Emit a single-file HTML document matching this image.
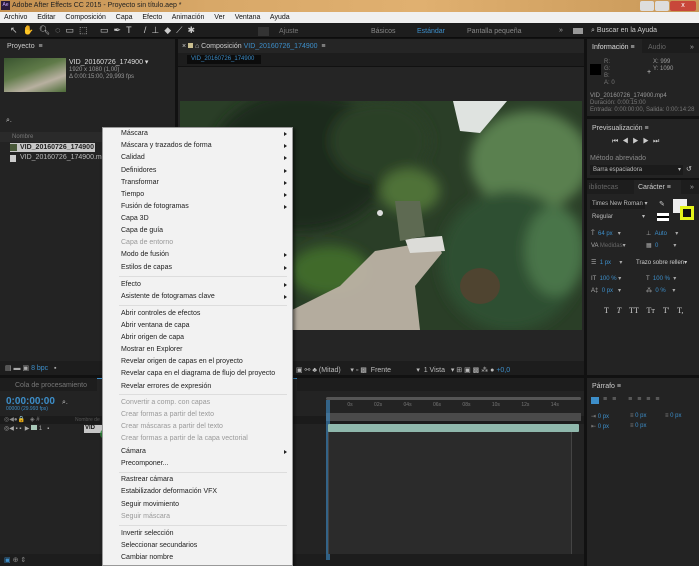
<!DOCTYPE html><html><head><meta charset="utf-8"><style>
*{margin:0;padding:0;box-sizing:border-box}
body{width:699px;height:566px;overflow:hidden;background:#111;font-family:"Liberation Sans",sans-serif;font-size:7px;color:#aaa;position:relative}
.a{position:absolute;white-space:nowrap}
.p{position:absolute;background:#232323}
.m{position:absolute;left:121px;color:#222;font-size:7px;white-space:nowrap}
.d{color:#9a9a9a}
.ar{position:absolute;left:284px;width:0;height:0;border-left:3px solid #222;border-top:2.5px solid transparent;border-bottom:2.5px solid transparent}
.sep{position:absolute;left:119px;width:168px;height:1px;background:#ddd}
.b{color:#3d8ec9}
.c{position:absolute;font-size:6px;color:#aaa;white-space:nowrap}
</style></head><body>
<div class="a" style="left:0;top:0;width:699px;height:12px;background:linear-gradient(90deg,#c49050,#d8a868 30%,#e0b070 60%,#c89858)"></div>
<div class="a" style="left:1px;top:1px;width:9px;height:9px;background:#2a1a3a;color:#c9a6ff;font-size:5px;line-height:9px;text-align:center">Ae</div>
<div class="a" style="left:12px;top:2px;color:#222;font-size:7px">Adobe After Effects CC 2015 - Proyecto sin título.aep *</div>
<div class="a" style="left:640px;top:1px;width:14px;height:10px;background:#ddd;border-radius:2px"></div>
<div class="a" style="left:655px;top:1px;width:14px;height:10px;background:#ddd;border-radius:2px"></div>
<div class="a" style="left:670px;top:1px;width:26px;height:10px;background:#c8473a;border-radius:2px;color:#fff;text-align:center;font-size:7px;line-height:10px">x</div>
<div class="a" style="left:0;top:12px;width:699px;height:11px;background:#f0f0f0;color:#111;font-size:7px;line-height:11px;padding-left:4px;word-spacing:3px">Archivo&nbsp; Editar&nbsp; Composición&nbsp; Capa&nbsp; Efecto&nbsp; Animación&nbsp; Ver&nbsp; Ventana&nbsp; Ayuda</div>
<div class="a" style="left:0;top:23px;width:699px;height:15px;background:#1d1d1d;border-bottom:1px solid #0c0c0c"></div>
<div class="a" style="left:10px;top:25px;color:#ccc;font-size:9px;letter-spacing:5px">↖✋🔍︎◌▭⬚ ▭✒T /⊥◆⟋✱</div>
<div class="a" style="left:258px;top:27px;width:11px;height:9px;background:#333"></div>
<div class="a" style="left:279px;top:28px;color:#777">Ajuste</div>
<div class="a" style="left:371px;top:28px;color:#888">Básicos</div>
<div class="a" style="left:417px;top:28px;color:#3d8ec9">Estándar</div>
<div class="a" style="left:467px;top:28px;color:#888">Pantalla pequeña</div>
<div class="a" style="left:559px;top:27px;color:#aaa">»</div>
<div class="a" style="left:573px;top:28px;width:10px;height:6px;background:#999"></div>
<div class="a" style="left:591px;top:27px;color:#ccc">⌕ Buscar en la Ayuda</div>
<!-- project -->
<div class="p" style="left:0;top:39px;width:175px;height:322px"></div>
<div class="a" style="left:7px;top:43px;color:#ccc">Proyecto &nbsp;≡</div>
<div class="a" style="left:4px;top:58px;width:62px;height:34px;background:linear-gradient(160deg,#3a5530,#5f7a48 40%,#b8b0a0 70%,#4a6a35)"></div>
<div class="a" style="left:69px;top:58px;color:#ddd">VID_20160726_174900 ▾</div>
<div class="a" style="left:69px;top:67px;color:#999;font-size:6px;line-height:7px">1920 x 1080 (1,00)<br>Δ 0:00:15:00, 29,993 fps</div>
<div class="a" style="left:6px;top:117px;color:#ccc">⌕.</div>
<div class="a" style="left:0;top:132px;width:175px;height:10px;background:#2a2a2a;color:#777;padding-left:12px;font-size:6px;line-height:10px">Nombre</div>
<div class="a" style="left:10px;top:143px;width:85px;height:9px;background:#c7c7c7;color:#222;font-weight:bold;font-size:7px;line-height:9px;padding-left:10px">VID_20160726_174900</div>
<div class="a" style="left:10px;top:144px;width:7px;height:7px;background:#4a5a3a"></div>
<div class="a" style="left:10px;top:155px;width:6px;height:7px;background:#ccc"></div>
<div class="a" style="left:20px;top:154px;color:#bbb">VID_20160726_174900.mp4</div>
<div class="a" style="left:0;top:361px;width:175px;height:14px;background:#1d1d1d"></div>
<div class="a" style="left:5px;top:364px;color:#aaa">▤ ▬ ▣ <span class="b">8 bpc</span> &nbsp; ▪</div>
<!-- comp -->
<div class="p" style="left:178px;top:39px;width:406px;height:322px;background:#252525"></div>
<div class="a" style="left:182px;top:43px;color:#ccc">× <span style="display:inline-block;width:5px;height:5px;background:#cbbf90"></span> ⌂ Composición <span class="b">VID_20160726_174900</span> &nbsp;≡</div>
<div class="a" style="left:178px;top:53px;width:406px;height:14px;background:#1d1d1d;border-bottom:1px solid #111"></div>
<div class="a" style="left:187px;top:55px;width:74px;height:9px;background:#0c0c0c;color:#3d8ec9;font-size:6px;line-height:9px;padding-left:4px">VID_20160726_174900</div>
<svg class="a" style="left:180px;top:101px" width="402" height="229" viewBox="0 0 402 229">
<defs><filter id="f" x="-50%" y="-50%" width="200%" height="200%"><feGaussianBlur stdDeviation="6"/></filter></defs>
<rect width="402" height="229" fill="#2a3e27"/>
<g filter="url(#f)">
<ellipse cx="120" cy="60" rx="90" ry="70" fill="#1e2c1c"/>
<ellipse cx="200" cy="40" rx="50" ry="40" fill="#2c3f25"/>
<ellipse cx="230" cy="90" rx="30" ry="22" fill="#4f7238"/>
<ellipse cx="150" cy="170" rx="40" ry="25" fill="#3f6a2c"/>
<ellipse cx="350" cy="60" rx="60" ry="50" fill="#5a8050"/>
<ellipse cx="330" cy="160" rx="70" ry="70" fill="#2f5030"/>
<ellipse cx="375" cy="150" rx="30" ry="45" fill="#4a7448"/>
</g>
<path d="M60 229 L100 215 L160 185 L195 150 L255 140 L262 152 L235 185 L240 229 Z" fill="#bcb2a4" opacity="0.95"/>
<path d="M225 138 L262 135 L265 150 L230 152 Z" fill="#dcdcd8"/>
<path d="M273 0 L327 0 L300 32 L280 30 Z" fill="#dfe3e0"/>
<path d="M215 100 L240 100 L245 135 L220 140 Z" fill="#5e6a52"/>
<ellipse cx="300" cy="185" rx="20" ry="18" fill="#4f4430"/>
<circle cx="200" cy="112" r="3" fill="#ddd"/>
</svg>
<div class="a" style="left:178px;top:361px;width:406px;height:14px;background:#1d1d1d"></div>
<div class="a" style="left:296px;top:366px;color:#bbb">▣ ⚯ ♣ (Mitad) &nbsp; &nbsp; ▾ ▫ ▩ &nbsp;Frente &nbsp; &nbsp; &nbsp; &nbsp; &nbsp; &nbsp; ▾ &nbsp;1 Vista &nbsp; ▾ ⊞ ▣ ▩ ⁂ ● <span class="b">+0,0</span></div>
<!-- right panel -->
<div class="p" style="left:587px;top:39px;width:112px;height:77px"></div>
<div class="a" style="left:587px;top:39px;width:112px;height:14px;background:#1d1d1d"></div>
<div class="a" style="left:587px;top:39px;width:55px;height:14px;background:#232323"></div>
<div class="a" style="left:592px;top:44px;color:#ddd">Información ≡</div>
<div class="a" style="left:648px;top:44px;color:#666">Audio</div>
<div class="a" style="left:690px;top:44px;color:#aaa">»</div>
<div class="a" style="left:590px;top:64px;width:11px;height:11px;background:#000"></div>
<div class="a" style="left:604px;top:59px;color:#777;font-size:6px;line-height:7px">R:<br>G:<br>B:<br>A: 0</div>
<div class="a" style="left:647px;top:69px;color:#ccc">+</div>
<div class="a" style="left:653px;top:59px;color:#999;font-size:6px;line-height:7px">X: 999<br>Y: 1090</div>
<div class="a" style="left:590px;top:93px;color:#999;font-size:6px;line-height:7px;white-space:nowrap">VID_20160726_174900.mp4<br><span style="color:#777">Duración: 0:00:15:00<br>Entrada: 0:00:00:00, Salida: 0:00:14:28</span></div>
<div class="p" style="left:587px;top:119px;width:112px;height:59px"></div>
<div class="a" style="left:592px;top:125px;color:#ccc">Previsualización ≡</div>
<div class="a" style="left:612px;top:138px;color:#ccc;letter-spacing:4px">⏮◀▶▶⏭</div>
<div class="a" style="left:590px;top:155px;color:#888">Método abreviado</div>
<div class="a" style="left:590px;top:165px;width:93px;height:10px;background:#1b1b1b;color:#bbb;padding-left:3px;line-height:10px;font-size:6px">Barra espaciadora <span style="float:right;padding-right:2px">▾</span></div>
<div class="a" style="left:686px;top:165px;color:#ccc">↺</div>
<div class="p" style="left:587px;top:180px;width:112px;height:195px"></div>
<div class="a" style="left:587px;top:180px;width:112px;height:14px;background:#1d1d1d"></div>
<div class="a" style="left:589px;top:184px;color:#666">ibliotecas</div>
<div class="a" style="left:634px;top:180px;width:47px;height:14px;background:#232323;color:#ccc;padding:4px 0 0 4px">Carácter ≡</div>
<div class="a" style="left:690px;top:184px;color:#aaa">»</div>
<div class="a" style="left:590px;top:200px;width:55px;height:9px;background:#1b1b1b;color:#bbb;font-size:6px;line-height:9px;padding-left:2px">Times New Roman ▾</div>
<div class="a" style="left:590px;top:213px;width:55px;height:9px;color:#bbb;font-size:6px;line-height:9px;padding-left:2px">Regular <span style="float:right">▾</span></div>
<div class="a" style="left:659px;top:200px;color:#ccc">✎</div>
<div class="a" style="left:673px;top:199px;width:14px;height:14px;background:#eee"></div>
<div class="a" style="left:680px;top:206px;width:14px;height:14px;background:#e4f41a;padding:3px"><div style="width:8px;height:8px;background:#111"></div></div>
<div class="a" style="left:657px;top:213px;width:12px;height:8px;background:linear-gradient(#fff 40%,#000 40%,#000 60%,#fff 60%)"></div>
<div class="c" style="left:591px;top:230px">T̄ &nbsp;<span class="b">64 px</span> &nbsp; ▾</div>
<div class="c" style="left:591px;top:242px">VA <span style="color:#666">Medidas</span>▾</div>
<div class="c" style="left:591px;top:259px">☰ &nbsp;<span class="b">1 px</span> &nbsp; &nbsp; ▾</div>
<div class="c" style="left:591px;top:275px">IT &nbsp;<span class="b">100 %</span> ▾</div>
<div class="c" style="left:591px;top:287px">A‡ &nbsp;<span class="b">0 px</span> &nbsp; ▾</div>
<div class="c" style="left:646px;top:230px">⊥ &nbsp;<span class="b">Auto</span> &nbsp; &nbsp; ▾</div>
<div class="c" style="left:646px;top:242px">▦ &nbsp;<span class="b">0</span> &nbsp; &nbsp; &nbsp; &nbsp; ▾</div>
<div class="c" style="left:636px;top:259px;color:#ccc">Trazo sobre rellen▾</div>
<div class="c" style="left:646px;top:275px">T &nbsp;<span class="b">100 %</span> &nbsp;▾</div>
<div class="c" style="left:646px;top:287px">⁂ &nbsp;<span class="b">0 %</span> &nbsp; &nbsp;▾</div>
<div class="a" style="left:604px;top:306px;color:#ccc;font-size:8px;font-family:'Liberation Serif',serif;word-spacing:6px">T <i>T</i> TT Tт T' T,</div>
<div class="p" style="left:587px;top:378px;width:112px;height:188px"></div>
<div class="a" style="left:592px;top:383px;color:#ccc">Párrafo ≡</div>
<div class="a" style="left:591px;top:397px;width:8px;height:7px;background:#3d8ec9"></div>
<div class="a" style="left:603px;top:396px;color:#888;letter-spacing:5px;font-size:7px">≡≡ ≡≡≡≡</div>
<div class="c" style="left:591px;top:413px;color:#888">⇥ <span class="b">0 px</span></div>
<div class="c" style="left:591px;top:423px;color:#888">⇤ <span class="b">0 px</span></div>
<div class="c" style="left:630px;top:413px;color:#888">≡ <span class="b">0 px</span></div>
<div class="c" style="left:630px;top:423px;color:#888">≡ <span class="b">0 px</span></div>
<div class="c" style="left:665px;top:413px;color:#888">≡ <span class="b">0 px</span></div>
<!-- timeline -->
<div class="p" style="left:0;top:378px;width:584px;height:188px"></div>
<div class="a" style="left:0;top:378px;width:584px;height:13px;background:#1d1d1d"></div>
<div class="a" style="left:15px;top:382px;color:#777">Cola de procesamiento</div>
<div class="a" style="left:97px;top:378px;width:200px;height:13px;background:#232323;border-top:1px solid #3d8ec9"></div>
<div class="a" style="left:6px;top:396px;color:#3d8ec9;font-size:10px;font-weight:bold">0:00:00:00</div>
<div class="a" style="left:6px;top:406px;color:#3d8ec9;font-size:5px">00000 (29.993 fps)</div>
<div class="a" style="left:62px;top:399px;color:#ccc">⌕.</div>
<div class="a" style="left:0;top:416px;width:584px;height:8px;background:#1b1b1b"></div>
<div class="a" style="left:4px;top:416px;color:#888;font-size:6px">◎◀●🔒 &nbsp; ◈ #</div>
<div class="a" style="left:75px;top:417px;color:#555;font-size:5px">Nombre de</div>
<div class="a" style="left:4px;top:425px;color:#aaa;font-size:6px">◎◀ ▪ ▪ &nbsp;▶ <span style="display:inline-block;width:6px;height:5px;background:#a8c8b8"></span> 1 &nbsp; ▪</div>
<div class="a" style="left:84px;top:425px;width:18px;height:8px;background:#c7c7c7;color:#111;font-weight:bold;font-size:6px;padding-left:1px">VID</div>
<div class="a" style="left:100px;top:429px;width:10px;height:10px;border-radius:50%;background:#2e8a3a;opacity:.8"></div>
<div class="a" style="left:0;top:554px;width:584px;height:12px;background:#1d1d1d"></div>
<div class="a" style="left:4px;top:556px;color:#3d8ec9;font-size:7px">▣ <span style="color:#888">⊕ ⇕</span></div>
<div class="a" style="left:326px;top:397px;width:255px;height:3px;background:#555;border-radius:2px"></div>
<div class="a" style="left:326px;top:402px;width:255px;height:10px;color:#777;font-size:5px;word-spacing:20px">&nbsp;0s 02s 04s 06s 08s 10s 12s 14s</div>
<div class="a" style="left:326px;top:413px;width:255px;height:8px;background:#4a4a4a"></div>
<div class="a" style="left:326px;top:400px;width:4px;height:160px;background:#3d8ec9;opacity:.6"></div>
<div class="a" style="left:328px;top:424px;width:251px;height:8px;background:#8fb8ac;border-radius:1px"></div>
<div class="a" style="left:328px;top:432px;width:244px;height:122px;background:#2b2b2b;border-left:1px solid #444;border-right:1px solid #444"></div>
<!-- context menu -->
<div class="a" style="left:102px;top:127px;width:191px;height:439px;background:#f2f2f2;border:1px solid #999;box-shadow:2px 2px 3px rgba(0,0,0,.5)"></div>
<div class="m" style="top:130px">Máscara</div><div class="ar" style="top:132px"></div>
<div class="m" style="top:142px">Máscara y trazados de forma</div><div class="ar" style="top:144px"></div>
<div class="m" style="top:154px">Calidad</div><div class="ar" style="top:156px"></div>
<div class="m" style="top:167px">Definidores</div><div class="ar" style="top:169px"></div>
<div class="m" style="top:179px">Transformar</div><div class="ar" style="top:181px"></div>
<div class="m" style="top:191px">Tiempo</div><div class="ar" style="top:193px"></div>
<div class="m" style="top:203px">Fusión de fotogramas</div><div class="ar" style="top:205px"></div>
<div class="m" style="top:215px">Capa 3D</div>
<div class="m" style="top:227px">Capa de guía</div>
<div class="m d" style="top:239px">Capa de entorno</div>
<div class="m" style="top:251px">Modo de fusión</div><div class="ar" style="top:253px"></div>
<div class="m" style="top:264px">Estilos de capas</div><div class="ar" style="top:266px"></div>
<div class="sep" style="top:276px"></div>
<div class="m" style="top:281px">Efecto</div><div class="ar" style="top:283px"></div>
<div class="m" style="top:293px">Asistente de fotogramas clave</div><div class="ar" style="top:295px"></div>
<div class="sep" style="top:305px"></div>
<div class="m" style="top:310px">Abrir controles de efectos</div>
<div class="m" style="top:322px">Abrir ventana de capa</div>
<div class="m" style="top:334px">Abrir origen de capa</div>
<div class="m" style="top:346px">Mostrar en Explorer</div>
<div class="m" style="top:358px">Revelar origen de capas en el proyecto</div>
<div class="m" style="top:370px">Revelar capa en el diagrama de flujo del proyecto</div>
<div class="m" style="top:383px">Revelar errores de expresión</div>
<div class="sep" style="top:394px"></div>
<div class="m d" style="top:399px">Convertir a comp. con capas</div>
<div class="m d" style="top:411px">Crear formas a partir del texto</div>
<div class="m d" style="top:423px">Crear máscaras a partir del texto</div>
<div class="m d" style="top:435px">Crear formas a partir de la capa vectorial</div>
<div class="m" style="top:448px">Cámara</div><div class="ar" style="top:450px"></div>
<div class="m" style="top:460px">Precomponer...</div>
<div class="sep" style="top:472px"></div>
<div class="m" style="top:476px">Rastrear cámara</div>
<div class="m" style="top:488px">Estabilizador deformación VFX</div>
<div class="m" style="top:501px">Seguir movimiento</div>
<div class="m d" style="top:513px">Seguir máscara</div>
<div class="sep" style="top:525px"></div>
<div class="m" style="top:530px">Invertir selección</div>
<div class="m" style="top:542px">Seleccionar secundarios</div>
<div class="m" style="top:554px">Cambiar nombre</div>
</body></html>
